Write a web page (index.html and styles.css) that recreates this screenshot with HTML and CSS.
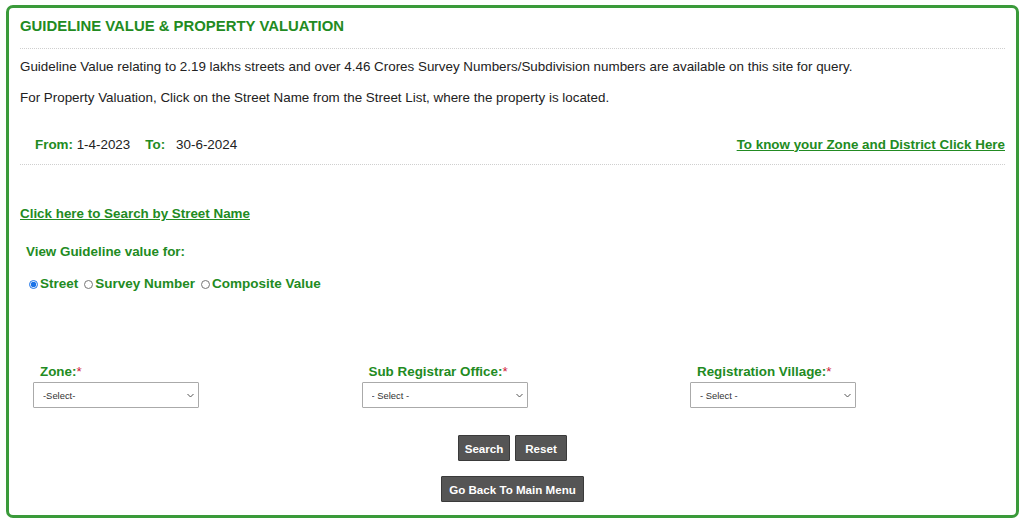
FILE: index.html
```html
<!DOCTYPE html>
<html>
<head>
<meta charset="utf-8">
<link rel="stylesheet" href="styles.css">
</head>
<body>
<div class="panel">
  <h1 class="title">GUIDELINE VALUE &amp; PROPERTY VALUATION</h1>
  <div class="rule"></div>
  <p class="text first">Guideline Value relating to 2.19 lakhs streets and over 4.46 Crores Survey Numbers/Subdivision numbers are available on this site for query.</p>
  <p class="text second">For Property Valuation, Click on the Street Name from the Street List, where the property is located.</p>
  <div class="period">
    <div class="dates"><span class="lbl">From:</span> 1-4-2023<span class="lbl to">To:</span><span class="val">30-6-2024</span></div>
    <a class="link" href="#">To know your Zone and District Click Here</a>
  </div>
  <div class="rule"></div>
  <a class="link street" href="#">Click here to Search by Street Name</a>
  <div class="view">View Guideline value for:</div>
  <div class="radios">
    <label><input type="radio" name="t" checked>Street</label>
    <label><input type="radio" name="t">Survey Number</label>
    <label><input type="radio" name="t">Composite Value</label>
  </div>
  <div class="fields">
    <div class="field">
      <div class="flabel">Zone:<span class="req">*</span></div>
      <div class="sel"><select><option>-Select-</option></select><svg class="chev" width="7" height="5" viewBox="0 0 7 5"><path d="M0.5 1 L3.5 4 L6.5 1" fill="none" stroke="#555" stroke-width="1"/></svg></div>
    </div>
    <div class="field">
      <div class="flabel">Sub Registrar Office:<span class="req">*</span></div>
      <div class="sel"><select><option>- Select -</option></select><svg class="chev" width="7" height="5" viewBox="0 0 7 5"><path d="M0.5 1 L3.5 4 L6.5 1" fill="none" stroke="#555" stroke-width="1"/></svg></div>
    </div>
    <div class="field">
      <div class="flabel">Registration Village:<span class="req">*</span></div>
      <div class="sel"><select><option>- Select -</option></select><svg class="chev" width="7" height="5" viewBox="0 0 7 5"><path d="M0.5 1 L3.5 4 L6.5 1" fill="none" stroke="#555" stroke-width="1"/></svg></div>
    </div>
  </div>
  <div class="btnrow">
    <button class="btn small">Search</button>
    <button class="btn small">Reset</button>
  </div>
  <div class="btnrow back">
    <button class="btn">Go Back To Main Menu</button>
  </div>
</div>
</body>
</html>
```
FILE: styles.css
```css
* { box-sizing: border-box; }
html, body { margin: 0; padding: 0; background: #fff; }
body { font-family: "Liberation Sans", Arial, sans-serif; color: #222; }
.panel {
  margin: 5px 0 0 6px;
  width: 1013px;
  height: 513px;
  border: 3px solid #3a9a3a;
  border-radius: 7px;
  padding: 0 11px 0 11px;
}
.title {
  margin: 0;
  padding-top: 10px;
  font-size: 14.9px;
  line-height: 17px;
  font-weight: bold;
  color: #228b22;
}
.rule { border-top: 1px dotted #cfcfcf; margin-top: 13px; height: 0; }
.text { margin: 0; font-size: 13.4px; line-height: 16px; color: #222; }
.first { margin-top: 10px; }
.second { margin-top: 15px; }
.period {
  display: flex;
  justify-content: space-between;
  align-items: center;
  margin-top: 30px;
  height: 16px;
  font-size: 13.4px;
}
.dates { padding-left: 15px; }
.lbl { font-weight: bold; color: #228b22; }
.to { margin-left: 15px; margin-right: 11px; }
.link { color: #228b22; font-weight: bold; text-decoration: underline; font-size: 13.4px; }
.period + .rule { margin-top: 12px; }
.street { display: block; margin-top: 41px; line-height: 16px; }
.view { margin-top: 22px; margin-left: 6px; font-size: 13.4px; line-height: 16px; font-weight: bold; color: #228b22; }
.radios { margin-top: 16px; margin-left: 9px; display: flex; gap: 6px; font-size: 13.5px; line-height: 16px; font-weight: bold; color: #228b22; }
.radios label { display: flex; align-items: center; }
.radios input { width: 9px; height: 9px; margin: 0 2px 0 0; accent-color: #1a73e8; }
.fields { display: flex; margin-top: 72px; padding-left: 13px; }
.field { flex: 0 0 328.5px; }
.flabel { margin-left: 7px; font-size: 13.4px; line-height: 16px; font-weight: bold; color: #228b22; }
.req { color: #d0203a; font-weight: normal; }
.sel { position: relative; width: 166px; margin-top: 2px; }
.chev { position: absolute; right: 5px; top: 11px; }
select {
  display: block;
  width: 166px;
  height: 26px;
  border: 1.5px solid #aaa;
  border-radius: 1px;
  background: #fff;
  -webkit-appearance: none;
  appearance: none;
  font-family: "Liberation Sans", Arial, sans-serif;
  font-size: 9.4px;
  color: #333;
  padding-left: 9px;
}
.btnrow { display: flex; justify-content: center; gap: 5px; margin-top: 27px; }
.btnrow.back { margin-top: 15px; }
.btn {
  background: #555;
  color: #fff;
  border: 1px solid #3a3a3a;
  border-radius: 1px;
  height: 26px;
  padding: 0 7px;
  font-family: "Liberation Sans", Arial, sans-serif;
  font-size: 11.6px;
  font-weight: bold;
}
.btn.small { width: 52px; padding: 0; }
```
